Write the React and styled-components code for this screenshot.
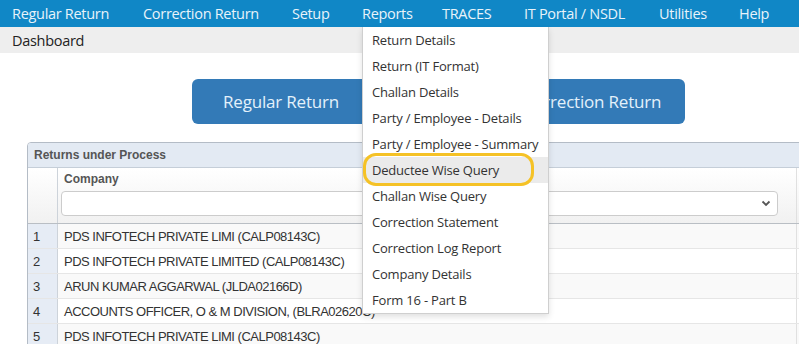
import React from 'react';
import styled, { createGlobalStyle } from 'styled-components';

const GlobalStyle = createGlobalStyle`
    html, body {
        margin: 0;
        padding: 0;
        background: #ffffff;
        overflow: hidden;
    }
    body {
        font-family: 'Open Sans', 'Noto Sans', sans-serif;
    }
`;

const Page = styled.div`
    width: 799px;
    height: 344px;
    position: relative;
    overflow: hidden;
`;

const MenuBar = styled.nav`
    display: flex;
    height: 27px;
    background: #1087c6;
    position: relative;
    z-index: 5;
`;
const MenuItem = styled.div`
    position: relative;
    flex: 0 0 ${props => props.w}px;
    padding-left: 12px;
    box-sizing: border-box;
    display: flex;
    align-items: center;
    font-size: 14.5px;
    letter-spacing: -0.3px;
    color: #e8f3fa;
    white-space: nowrap;
`;

const Dropdown = styled.ul`
    position: absolute;
    top: 27px;
    left: 12px;
    width: 187px;
    margin: 0;
    padding: 0;
    list-style: none;
    background: #ffffff;
    border: 1px solid #cfcfcf;
    border-top: none;
    box-sizing: border-box;
    box-shadow: 0 3px 6px rgba(0, 0, 0, 0.12);
`;
const DropItem = styled.li`
    height: 26px;
    display: flex;
    align-items: center;
    padding-left: 9px;
    font-size: 13px;
    letter-spacing: -0.2px;
    color: #333333;
    background: ${props => (props.active ? '#ebebeb' : '#ffffff')};
`;
const Marker = styled.div`
    position: absolute;
    left: 0;
    top: 126px;
    width: 171px;
    height: 33px;
    box-sizing: border-box;
    border: 3.5px solid #f5c226;
    border-radius: 13px;
    pointer-events: none;
`;

const Crumb = styled.div`
    height: 26px;
    background: #eeeeee;
    display: flex;
    align-items: center;
    padding-left: 12px;
    font-size: 14.5px;
    letter-spacing: -0.3px;
    color: #222222;
`;

const ButtonRow = styled.div`
    display: flex;
    gap: 129px;
    padding-left: 192px;
    margin-top: 26px;
`;
const BigButton = styled.button`
    width: ${props => props.w}px;
    height: 45px;
    border: none;
    border-radius: 6px;
    background: #337ab7;
    color: #e3f1fb;
    font-family: 'Open Sans', 'Noto Sans', sans-serif;
    font-size: 17px;
    letter-spacing: -0.2px;
    white-space: nowrap;
    padding: 0;
`;

const Panel = styled.section`
    margin: 18px 0 0 27px;
    width: 800px;
    border: 1px solid #b4bcc6;
    border-radius: 4px 0 0 0;
    font-family: 'Liberation Sans', Arial, sans-serif;
    overflow: hidden;
`;
const PanelTitle = styled.div`
    height: 24px;
    background: #e3eaf3;
    border-bottom: 1px solid #c5ced8;
    display: flex;
    align-items: center;
    padding-left: 6px;
    font-size: 12px;
    font-weight: bold;
    color: #555555;
`;
const Row = styled.div`
    display: grid;
    grid-template-columns: 30px 739px 1fr;
    height: ${props => props.h || 25}px;
    box-sizing: border-box;
    border-bottom: 1px solid ${props => props.line || '#e6e6e6'};
    background: ${props => props.bg || '#ffffff'};
`;
const NumCell = styled.div`
    background: ${props => props.bg || '#e6ecf5'};
    border-right: 1px solid #cdd3da;
    display: flex;
    align-items: center;
    padding-left: 5px;
    font-size: 13px;
    color: #333333;
`;
const Cell = styled.div`
    display: flex;
    align-items: center;
    padding-left: 6px;
    font-size: 13px;
    letter-spacing: -0.5px;
    color: #333333;
    white-space: nowrap;
    border-right: 1px solid #e0e0e0;
`;
const HeadCell = styled.div`
    display: flex;
    flex-direction: column;
    padding: 4px 18px 0 3px;
    gap: 5px;
    border-right: 1px solid #e0e0e0;
`;
const HeadLabel = styled.span`
    font-size: 12px;
    font-weight: bold;
    color: #555555;
    padding-left: 3px;
`;
const SelectBox = styled.div`
    height: 25px;
    box-sizing: border-box;
    border: 1px solid #cccccc;
    border-radius: 4px;
    background: #ffffff;
    display: flex;
    align-items: center;
    justify-content: flex-end;
    padding-right: 6px;
`;

const menus = [
    { label: 'Regular Return', w: 131 },
    { label: 'Correction Return', w: 149 },
    { label: 'Setup', w: 70 },
    { label: 'Reports', w: 80 },
    { label: 'TRACES', w: 82 },
    { label: 'IT Portal / NSDL', w: 135 },
    { label: 'Utilities', w: 80 },
    { label: 'Help', w: 72 },
];

const reports = [
    'Return Details',
    'Return (IT Format)',
    'Challan Details',
    'Party / Employee - Details',
    'Party / Employee - Summary',
    'Deductee Wise Query',
    'Challan Wise Query',
    'Correction Statement',
    'Correction Log Report',
    'Company Details',
    'Form 16 - Part B',
];

const companies = [
    'PDS INFOTECH PRIVATE LIMI (CALP08143C)',
    'PDS INFOTECH PRIVATE LIMITED (CALP08143C)',
    'ARUN KUMAR AGGARWAL (JLDA02166D)',
    'ACCOUNTS OFFICER, O & M DIVISION, (BLRA02620C)',
    'PDS INFOTECH PRIVATE LIMI (CALP08143C)',
];

const Chevron = () => (
    <svg width="10" height="7" viewBox="0 0 10 7">
        <path d="M1.5 1.5 L5 5 L8.5 1.5" fill="none" stroke="#555" strokeWidth="1.8" />
    </svg>
);

const App = () => {
    return (
        <Page>
            <GlobalStyle />
            <MenuBar>
                {menus.map(m => (
                    <MenuItem key={m.label} w={m.w}>
                        {m.label}
                        {m.label === 'Reports' && (
                            <Dropdown>
                                {reports.map(r => (
                                    <DropItem key={r} active={r === 'Deductee Wise Query'}>
                                        {r}
                                    </DropItem>
                                ))}
                                <Marker />
                            </Dropdown>
                        )}
                    </MenuItem>
                ))}
            </MenuBar>
            <Crumb>Dashboard</Crumb>
            <ButtonRow>
                <BigButton w={178}>Regular Return</BigButton>
                <BigButton w={186}>Correction Return</BigButton>
            </ButtonRow>
            <Panel>
                <PanelTitle>Returns under Process</PanelTitle>
                <Row h={56} line="#b9bec4" bg="linear-gradient(#ffffff, #f1f1f1)">
                    <NumCell bg="transparent" />
                    <HeadCell>
                        <HeadLabel>Company</HeadLabel>
                        <SelectBox>
                            <Chevron />
                        </SelectBox>
                    </HeadCell>
                    <div />
                </Row>
                {companies.map((c, i) => (
                    <Row key={i} bg={i % 2 === 0 ? '#f9f9f9' : '#ffffff'}>
                        <NumCell>{i + 1}</NumCell>
                        <Cell>{c}</Cell>
                        <div />
                    </Row>
                ))}
            </Panel>
        </Page>
    );
};

export default App;
